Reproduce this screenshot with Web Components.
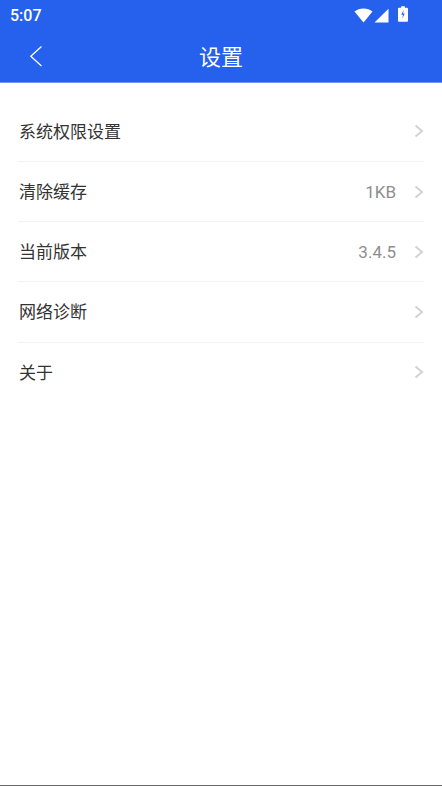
<!DOCTYPE html>
<html lang="zh">
<head>
<meta charset="utf-8">
<title>设置</title>
<style>
html, body { margin: 0; height: 100%; background: #fff; }
body { font-family: "Roboto", "Noto Sans CJK SC", sans-serif; }
settings-page { height: 786px; }
</style>
</head>
<body>
<settings-page>
    <app-header slot="header" title="设置" time="5:07"></app-header>
    <setting-row label="系统权限设置"></setting-row>
    <setting-row label="清除缓存" value="1KB"></setting-row>
    <setting-row label="当前版本" value="3.4.5"></setting-row>
    <setting-row label="网络诊断"></setting-row>
    <setting-row label="关于" last></setting-row>
</settings-page>

<script>
class SettingsPage extends HTMLElement {
    constructor() {
        super();
        this.attachShadow({ mode: 'open' });
        this.shadowRoot.innerHTML = `
            <style>
                :host { display: flex; flex-direction: column; box-sizing: border-box; width: 442px; background: #fff; border-bottom: 1px solid #6b6b6b; }
                .list { display: flex; flex-direction: column; padding: 18.8px 18px 0 18px; }
            </style>
            <slot name="header"></slot>
            <div class="list"><slot></slot></div>
        `;
    }
}
customElements.define('settings-page', SettingsPage);

class AppHeader extends HTMLElement {
    constructor() {
        super();
        this.attachShadow({ mode: 'open' });
    }

    connectedCallback() {
        const title = this.getAttribute('title');
        const time = this.getAttribute('time');
        this.shadowRoot.innerHTML = `
            <style>
                :host { display: block; background: #2561ec; color: #fff; border-bottom: 1px solid #6f97f5; }
                .status { height: 30px; display: flex; align-items: center; justify-content: space-between; padding: 0 34px 0 10px; }
                .time { font: 500 16px/30px "Roboto", sans-serif; padding-top: 2px; }
                .icons { display: flex; align-items: center; }
                svg { display: block; }
                .wifi { margin-right: 1px; }
                .battery { margin: 0 0 2px 9px; }
                .bar { height: 52px; display: flex; align-items: center; justify-content: center; position: relative; }
                .back { position: absolute; left: 29px; top: 15px; }
                h1 { margin: 0 0 2px; font: 400 22px/50px "Noto Sans CJK SC", sans-serif; }
            </style>
            <div class="status">
                <span class="time">${time}</span>
                <span class="icons">
                    <svg class="wifi" width="19" height="15" viewBox="0 0 19 15"><path fill="#fff" d="M0.500 3.600C3 1.600 6 .6 9.500 .6s6.500 1 9 3L9.500 14.500z"/></svg>
                    <svg width="15" height="15" viewBox="0 0 15 15"><path fill="#fff" d="M14.500 .8V14.500H.5z"/></svg>
                    <svg class="battery" width="10" height="16" viewBox="0 0 11 17"><path fill="#fff" d="M3.500 0h4v1.500H10a1 1 0 0 1 1 1V16a1 1 0 0 1-1 1H1a1 1 0 0 1-1-1V2.500a1 1 0 0 1 1-1h2.500z"/><path fill="#2561ec" d="M6.300 3.800 3.600 9.300h1.900L4.700 13.800l2.700-5.800H5.500z"/></svg>
                </span>
            </div>
            <div class="bar">
                <svg class="back" width="14" height="22" viewBox="0 0 14 22"><path fill="none" stroke="#fff" stroke-width="1.300" d="M12.500 1.500 1.800 11.200l10.700 9.800"/></svg>
                <h1>${title}</h1>
            </div>
        `;
    }
}
customElements.define('app-header', AppHeader);

class SettingRow extends HTMLElement {
    constructor() {
        super();
        this.attachShadow({ mode: 'open' });
    }

    connectedCallback() {
        const label = this.getAttribute('label');
        const value = this.getAttribute('value') || '';
        this.shadowRoot.innerHTML = `
            <style>
                :host { display: flex; align-items: center; box-sizing: border-box; height: 60.2px; border-bottom: 1px solid #f3f3f3; }
                :host([last]) { border-bottom-color: transparent; }
                .label { flex: 1; font: 400 17px/22px "Noto Sans CJK SC", sans-serif; color: #333; padding: 0 0 1px 1px; }
                .value { font: 400 17px/24px "Roboto", sans-serif; color: #8e8e8e; margin-right: 18px; padding-top: 1px; }
                svg { display: block; }
            </style>
            <span class="label">${label}</span>
            <span class="value">${value}</span>
            <svg width="10" height="14" viewBox="0 0 10 14"><path fill="none" stroke="#d2d2d2" stroke-width="2" d="M1.500 1.500 8 7l-6.500 5.500"/></svg>
        `;
    }
}
customElements.define('setting-row', SettingRow);
</script>
</body>
</html>
